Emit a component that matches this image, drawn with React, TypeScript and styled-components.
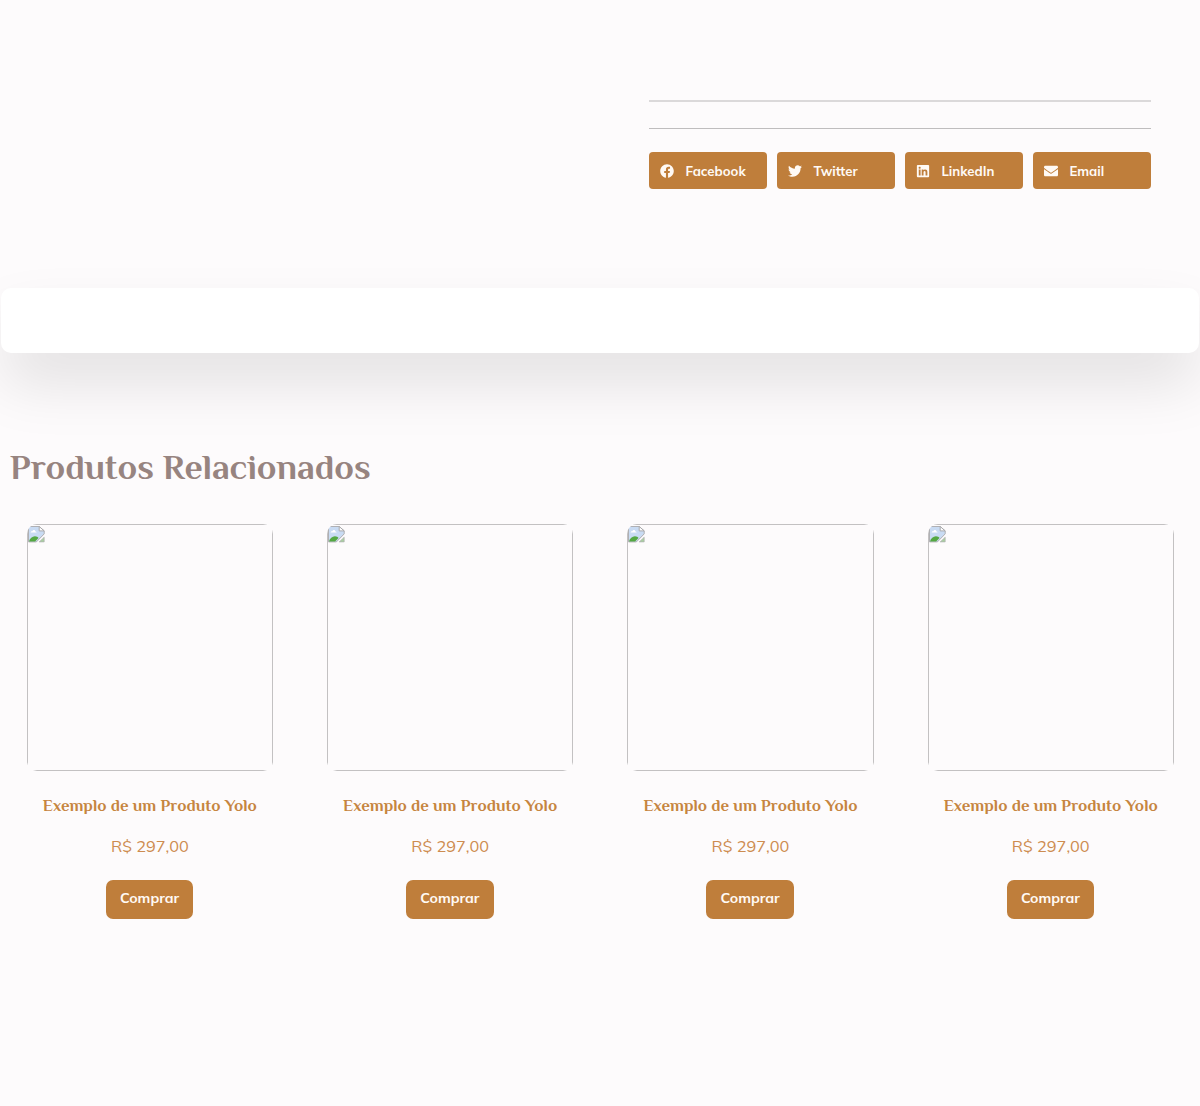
import React from "react";
import styled, { createGlobalStyle } from "styled-components";
import { FaFacebook, FaTwitter, FaLinkedin, FaEnvelope } from "react-icons/fa";
import type { IconType } from "react-icons";

const accent = "#bf7e3b";
const sans = `"Mulish", "Noto Sans", "Open Sans", sans-serif`;
const display = `"Philosopher", "Liberation Serif", serif`;

const GlobalStyle = createGlobalStyle`
  *, *::before, *::after { box-sizing: border-box; }
  body { margin: 0; background: #fdfbfc; font-family: ${sans}; }
`;

const Page = styled.main`
  height: 1106px;
  overflow: hidden;
  background: #fdfbfc;
`;

const Summary = styled.section`
  display: flex;
  flex-direction: column;
  width: 502px;
  height: 288px;
  margin-left: 649px;
  padding-top: 100px;
`;

const Divider = styled.hr<{ $thick?: boolean }>`
  width: 100%;
  height: ${(p) => (p.$thick ? 2 : 1)}px;
  margin: 0 0 ${(p) => (p.$thick ? 26 : 23.4)}px;
  border: 0;
  background: ${(p) => (p.$thick ? "#dbd9da" : "#bfbdbe")};
`;

const ShareRow = styled.div`
  display: grid;
  grid-template-columns: repeat(4, 118px);
  gap: 10px;
`;

const ShareButton = styled.button`
  display: flex;
  align-items: center;
  height: 36.6px;
  padding: 0 0 0 11px;
  border: 0;
  border-radius: 4px;
  background: ${accent};
  color: #fffaf5;
  svg { flex: none; width: 14px; height: 14px; }
`;

const ShareLabel = styled.span`
  margin-left: 11.4px;
  font: 700 13.2px/18px ${sans};
  white-space: nowrap;
`;

const Panel = styled.section`
  height: 65px;
  margin: 0 1px;
  border-radius: 10px;
  background: #fff;
  box-shadow: 0 31px 60px -2px rgba(0, 0, 0, 0.115);
`;

const Related = styled.section`
  padding-top: 92px;
`;

const Heading = styled.h2`
  height: 44px;
  margin: 0 0 35px 10px;
  color: #978480;
  font: 700 35.7px/44px ${display};
  white-space: nowrap;
`;

const ProductGrid = styled.ul`
  display: grid;
  grid-template-columns: repeat(4, 246.3px);
  column-gap: 54px;
  margin: 0;
  padding: 0 0 0 26.7px;
  list-style: none;
`;

const Card = styled.li`
  display: flex;
  flex-direction: column;
  align-items: center;
`;

const Thumb = styled.div`
  width: 100%;
  height: 247px;
  border-radius: 10px;
  overflow: hidden;
`;

const ThumbFrame = styled.div`
  height: 100%;
  border: 1px solid #c3c1c2;
  svg { display: block; }
`;

const Title = styled.h3`
  margin: 23px 0 0;
  color: #c6853f;
  font: 700 16.85px/24px ${display};
  white-space: nowrap;
`;

const Price = styled.span`
  margin-top: 16px;
  color: #cd8c50;
  font: 400 16.3px/24px ${sans};
  white-space: nowrap;
`;

const BuyButton = styled.button`
  width: 87.5px;
  height: 38.5px;
  margin: 22px 0.6px 0 0;
  padding: 0 0 2px;
  border: 0;
  border-radius: 7px;
  background: ${accent};
  color: #fffaf5;
  font: 700 14.2px/20px ${sans};
`;

const MissingImage = () => (
  <svg width="17" height="18" viewBox="0 0 17 18" aria-hidden="true">
    <path d="M.5 1.5h10.7l5 4.4v3L8.4 16.9H.5z" fill="#c9dbf3" stroke="#b0b0b3" />
    <path d="M11.2 1.5v4.4h5z" fill="#fff" stroke="#a8a8ab" />
    <path d="M2.7 7.6c0-1.1.9-1.6 1.7-1.4.5-1.6 2.7-1.4 2.9.2 1 0 1.3.6 1.3 1.2z" fill="#fff" />
    <path d="M1 16.4c.8-3 3.3-5.1 5.9-5.1 1.9 0 2.8.7 3.6 1.7l-3.4 3.4z" fill="#54a842" />
    <path d="M11.2 16.9 16.2 12.2v4.7z" fill="#a9cf9f" stroke="#b0b0b3" strokeWidth=".7" />
  </svg>
);

const networks: { label: string; icon: IconType }[] = [
  { label: "Facebook", icon: FaFacebook },
  { label: "Twitter", icon: FaTwitter },
  { label: "LinkedIn", icon: FaLinkedin },
  { label: "Email", icon: FaEnvelope },
];

const products = Array.from({ length: 4 }, (_, id) => ({
  id,
  name: "Exemplo de um Produto Yolo",
  price: "R$ 297,00",
}));

export default function App() {
  return (
    <Page>
      <GlobalStyle />
      <Summary>
        <Divider $thick />
        <Divider />
        <ShareRow>
          {networks.map(({ label, icon: Icon }) => (
            <ShareButton key={label}>
              <Icon />
              <ShareLabel>{label}</ShareLabel>
            </ShareButton>
          ))}
        </ShareRow>
      </Summary>
      <Panel />
      <Related>
        <Heading>Produtos Relacionados</Heading>
        <ProductGrid>
          {products.map((p) => (
            <Card key={p.id}>
              <Thumb>
                <ThumbFrame>
                  <MissingImage />
                </ThumbFrame>
              </Thumb>
              <Title>{p.name}</Title>
              <Price>{p.price}</Price>
              <BuyButton>Comprar</BuyButton>
            </Card>
          ))}
        </ProductGrid>
      </Related>
    </Page>
  );
}
